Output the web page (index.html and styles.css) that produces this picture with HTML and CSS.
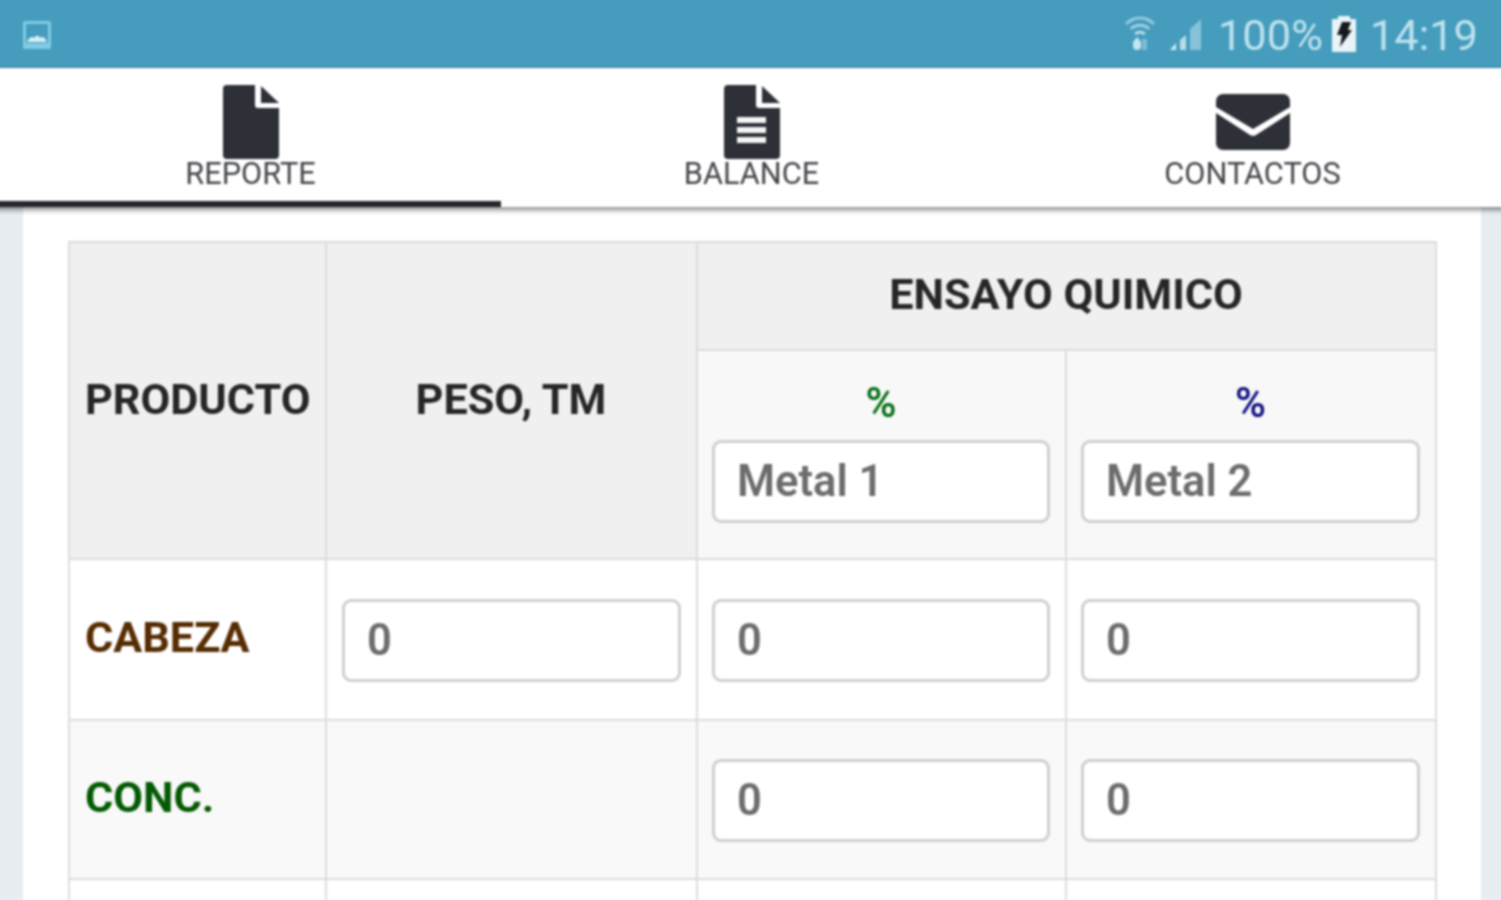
FILE: index.html
```html
<!DOCTYPE html>
<html lang="es">
<head>
<meta charset="utf-8">
<title>Reporte</title>
<link rel="stylesheet" href="styles.css">
</head>
<body>
<div class="app">
  <header class="status">
    <svg class="status-img" viewBox="0 0 30 30" width="30" height="30"><rect x="1" y="1" width="28" height="28" rx="2" fill="#7fcbe4"/><rect x="4" y="4" width="22" height="19" fill="#459cbd"/><path d="M5 22c2-5 5-6 7-4 2-3 5-3 6 0 2-2 5-1 7 4z" fill="#d8eff6"/></svg>
    <div class="status-right">
      <svg class="wifi" viewBox="0 0 32 36" width="32" height="36"><g fill="none" stroke="#b7dde9" stroke-width="3"><path d="M2 9C10 1 22 1 30 9" opacity=".7"/><path d="M7 14c5-5 13-5 18 0" opacity=".8"/><path d="M11 19c3-2 7-2 10 0"/></g><path d="M9 27l4-5 4 5v4a4 4 0 0 1-8 0z" fill="#c4e6ef"/><rect x="18" y="24" width="5" height="11" fill="#7dbdd3"/></svg>
      <svg class="signal" viewBox="0 0 34 34" width="34" height="34"><path d="M33 1v31H22V11z" fill="#86c3d8"/><path d="M18 17v15h-6V22z" fill="#b7dde9"/><path d="M8 25v7H2z" fill="#d4edf4"/></svg>
      <span class="status-text">100%</span>
      <svg class="battery" viewBox="0 0 24 36" width="24" height="36"><rect x="6" y="0" width="12" height="4" fill="#e8f4f7"/><rect x="0" y="3" width="24" height="33" rx="1" fill="#e8f4f7"/><path d="M10 6h9l-3 8h4L8 31l2-12H5z" fill="#16181c"/></svg>
      <span class="status-text time">14:19</span>
    </div>
  </header>
  <nav class="tabs">
    <div class="tab active">
      <svg class="doc" viewBox="0 0 56 74" width="56" height="74"><path d="M4 0H32V20a3 3 0 0 0 3 3H56V70a4 4 0 0 1-4 4H4a4 4 0 0 1-4-4V4a4 4 0 0 1 4-4z" fill="#2e3038"/><path d="M38 1 56 18H38z" fill="#2e3038"/></svg>
      <span class="tab-label">REPORTE</span>
    </div>
    <div class="tab">
      <svg class="doc" viewBox="0 0 56 74" width="56" height="74"><path d="M4 0H32V20a3 3 0 0 0 3 3H56V70a4 4 0 0 1-4 4H4a4 4 0 0 1-4-4V4a4 4 0 0 1 4-4z" fill="#2e3038"/><path d="M38 1 56 18H38z" fill="#2e3038"/><path d="M13 32H42V38H13zM13 42H42V48H13zM13 52H42V58H13z" fill="#f4f4f4"/></svg>
      <span class="tab-label">BALANCE</span>
    </div>
    <div class="tab">
      <svg class="mail" viewBox="0 0 74 74" width="74" height="74"><path d="M7 9H67a7 7 0 0 1 7 7v6L37 44 0 22v-6a7 7 0 0 1 7-7z" fill="#2e3038"/><path d="M0 28 34 50a6 6 0 0 0 6 0L74 28V58a7 7 0 0 1-7 7H7a7 7 0 0 1-7-7z" fill="#2e3038"/></svg>
      <span class="tab-label">CONTACTOS</span>
    </div>
  </nav>
  <main class="page">
    <section class="card">
      <table class="grid">
        <colgroup><col class="c1"><col class="c2"><col class="c3"><col class="c4"></colgroup>
        <tbody>
          <tr class="r-head1">
            <th rowspan="2" class="left">PRODUCTO</th>
            <th rowspan="2" class="tall">PESO, TM</th>
            <th colspan="2">ENSAYO QUIMICO</th>
          </tr>
          <tr class="r-head2">
            <td class="metal"><div class="pct green">%</div><input class="field" placeholder="Metal 1"></td>
            <td class="metal"><div class="pct blue">%</div><input class="field" placeholder="Metal 2"></td>
          </tr>
          <tr class="r-data">
            <td class="name brown">CABEZA</td>
            <td class="weight"><input class="field" placeholder="0"></td>
            <td><input class="field" placeholder="0"></td>
            <td><input class="field" placeholder="0"></td>
          </tr>
          <tr class="r-data odd">
            <td class="name dgreen">CONC.</td>
            <td></td>
            <td><input class="field" placeholder="0"></td>
            <td><input class="field" placeholder="0"></td>
          </tr>
          <tr class="r-data">
            <td></td><td></td><td></td><td></td>
          </tr>
        </tbody>
      </table>
    </section>
  </main>
</div>
</body>
</html>
```
FILE: styles.css
```css
* { box-sizing: border-box; }
html, body { margin: 0; height: 100%; overflow: hidden; background: #e8edf1; }
body { font-family: Roboto, "Liberation Sans", sans-serif; }
/* the frame runs 4px past the window so the soft edge of the blur stays out of sight */
.app { width: 1509px; height: 908px; margin: -4px; overflow: hidden; display: flex; flex-direction: column; filter: blur(0.8px); }

.status { flex: 0 0 72px; height: 72px; background: #459cbd; border-bottom: 1px solid #3b8fb0; display: flex; align-items: center; justify-content: space-between; padding: 4px 27px 0 26px; }
.status-img { margin-top: 3px; }
.status-right { display: flex; align-items: center; }
.wifi { margin-right: 12px; margin-bottom: 1px; }
.signal { margin-right: 16px; margin-top: 3px; }
.status-text { font-size: 43.4px; font-weight: 400; color: #bfe3ee; line-height: 68px; padding-top: 4px; }
.battery { margin: 0 14px 0 9px; }

.tabs { flex: 0 0 139px; display: flex; background: #fff; position: relative; z-index: 2; box-shadow: 0 3px 5px rgba(0,0,0,.45); }
.tab { flex: 0 0 501px; display: flex; flex-direction: column; align-items: center; padding-top: 17px; height: 139px; }
.tab.active { flex-basis: 505px; padding-left: 4px; border-bottom: 6px solid #25272d; }
.doc, .mail { display: block; flex: 0 0 74px; }
.tab-label { font-size: 30.7px; line-height: 30px; color: #44464b; }

.page { flex: 1; padding: 0 24px 0 27px; overflow: hidden; }
.card { background: #fff; height: 100%; padding: 34px 45px 0 45px; }

.grid { border-collapse: collapse; table-layout: fixed; width: 1367px; }
.c1 { width: 257px; } .c2 { width: 371px; } .c3 { width: 369px; } .c4 { width: 370px; }
.grid th, .grid td { border: 2px solid #dcdcdc; padding: 0 15px 0 14px; vertical-align: middle; }
.grid th { background: #f0f0f0; font-size: 43.2px; font-weight: 700; color: #262626; text-align: center; padding-bottom: 4px; }
.grid th.left { text-align: left; padding-left: 15px; padding-right: 0; padding-bottom: 2px; }
.grid th.tall { padding-bottom: 2px; }
.r-head1 { height: 108px; }
.r-head2 { height: 209px; }
.r-head2 td { background: #f8f8f8; }
.r-data { height: 161px; }
.r-data td { padding-top: 2px; }
.r-data.odd { height: 159px; }
.r-data.odd td { background: #f9f9f9; }
.grid .metal { text-align: center; padding-top: 0; padding-bottom: 6px; }
.grid .weight { padding-left: 15px; }
.pct { font-size: 42px; font-weight: 500; line-height: 44px; margin-bottom: 15px; }
.green { color: #006e12; }
.blue { color: #0c0c80; }
.grid .name { font-size: 43.2px; font-weight: 700; padding: 0 0 4px 15px; }
.brown { color: #562c02; }
.dgreen { color: #045a04; }
.field { display: block; width: 100%; height: 83px; padding: 0 22px; border: 3px solid #cfcfcf; border-radius: 9px; background: #fff; font-family: Roboto, sans-serif; font-size: 43.5px; font-weight: 600; color: #6c6c6c; outline: none; }
.field::placeholder { color: #6c6c6c; opacity: 1; }
```
